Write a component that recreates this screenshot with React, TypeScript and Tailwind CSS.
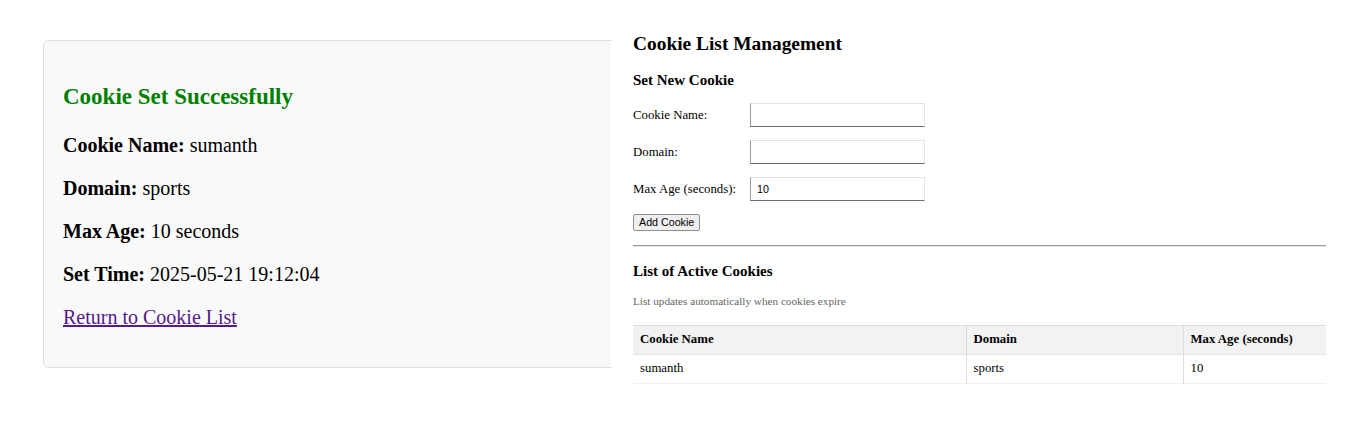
import React from "react";

export default function App() {
  const serif = { fontFamily: '"Liberation Serif", "Times New Roman", serif' };
  return (
    <div className="flex w-[1349px] h-[428px] bg-white text-black overflow-hidden" style={serif}>
      {/* Left panel */}
      <div className="w-[611px] shrink-0 overflow-hidden pl-[43px] pt-[40px]">
        <div className="w-[640px] h-[328px] bg-[#f9f9f9] border border-[#dddddd] rounded-[6px] px-[19px] pt-[43px]">
          <h2 className="text-[23px] leading-[26px] font-bold text-[#008000]">Cookie Set Successfully</h2>
          <p className="text-[20px] leading-[23px] mt-[24px]"><b>Cookie Name:</b> sumanth</p>
          <p className="text-[20px] leading-[23px] mt-[20px]"><b>Domain:</b> sports</p>
          <p className="text-[20px] leading-[23px] mt-[20px]"><b>Max Age:</b> 10 seconds</p>
          <p className="text-[20px] leading-[23px] mt-[20px]"><b>Set Time:</b> 2025-05-21 19:12:04</p>
          <p className="text-[20px] leading-[23px] mt-[20px]">
            <a href="#" className="text-[#551a8b] underline">Return to Cookie List</a>
          </p>
        </div>
      </div>

      {/* Right panel */}
      <div className="flex-1 pl-[22px] pr-[23px] pt-[33px]">
        <h2 className="text-[19.4px] leading-[22px] font-bold">Cookie List Management</h2>
        <h3 className="text-[15px] leading-[17px] font-bold mt-[17px]">Set New Cookie</h3>

        <div className="mt-[14px] flex flex-col gap-[13px]">
          {[
            ["Cookie Name:", ""],
            ["Domain:", ""],
            ["Max Age (seconds):", "10"],
          ].map(([label, val], i) => (
            <div key={i} className="flex items-center">
              <span className="w-[117px] text-[12.8px] leading-[15px]">{label}</span>
              <div
                className="w-[175px] h-[24px] bg-white border border-t-[#e3e3e3] border-r-[#e3e3e3] border-l-[#9a9a9a] border-b-[#6f6f6f] flex items-center pl-[6px] text-[10.7px]"
                style={{ fontFamily: '"Liberation Sans", Arial, sans-serif' }}
              >
                {val}
              </div>
            </div>
          ))}
        </div>

        <button
          className="mt-[13px] h-[17px] px-[5px] bg-[#efefef] border border-[#8f8f8f] rounded-[2px] text-[10.7px] leading-[13px] block"
          style={{ fontFamily: '"Liberation Sans", Arial, sans-serif' }}
        >
          Add Cookie
        </button>

        <div className="mt-[14px] border-t border-t-[#9a9a9a] border-b border-b-[#e8e8e8]" />

        <h3 className="text-[15px] leading-[17px] font-bold mt-[16px]">List of Active Cookies</h3>
        <p className="text-[11.2px] leading-[13px] text-[#666666] mt-[15px]">List updates automatically when cookies expire</p>

        <table className="mt-[17px] w-full table-fixed border-collapse text-[12.8px]">
          <colgroup>
            <col className="w-[333px]" />
            <col className="w-[217px]" />
            <col />
          </colgroup>
          <thead>
            <tr className="bg-[#f2f2f2] h-[29px] border-t border-t-[#dddddd]">
              <th className="text-left font-bold pl-[7px]">Cookie Name</th>
              <th className="text-left font-bold pl-[7px] border-l border-l-[#dddddd]">Domain</th>
              <th className="text-left font-bold pl-[7px] border-l border-l-[#dddddd]">Max Age (seconds)</th>
            </tr>
          </thead>
          <tbody>
            <tr className="h-[29px] border-t border-t-[#e4e4e4] border-b border-b-[#f0f0f0]">
              <td className="pl-[7px]">sumanth</td>
              <td className="pl-[7px] border-l border-l-[#dddddd]">sports</td>
              <td className="pl-[7px] border-l border-l-[#dddddd] text-black">10</td>
            </tr>
          </tbody>
        </table>
      </div>
    </div>
  );
}
